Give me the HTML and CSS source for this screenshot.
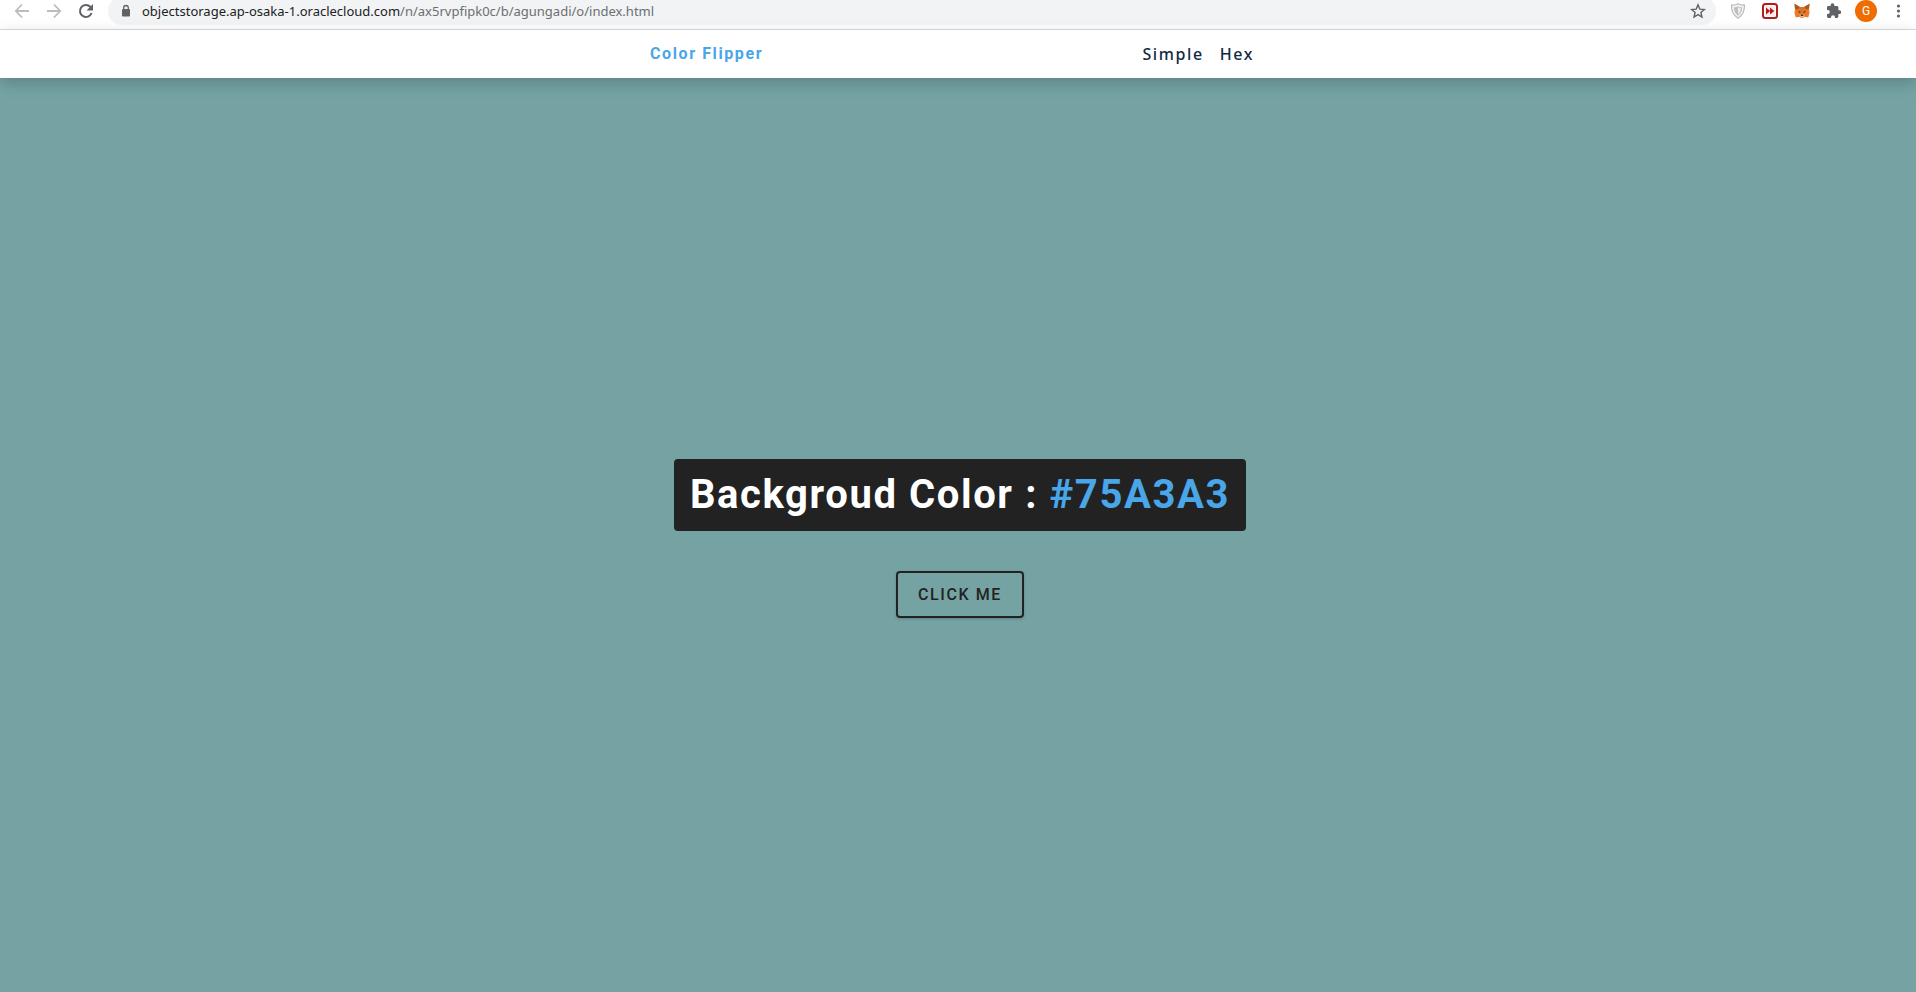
FILE: index.html
```html
<!DOCTYPE html>
<html lang="en">
<head>
<meta charset="utf-8">
<meta name="viewport" content="width=device-width, initial-scale=1">
<title>Color Flipper</title>
<link rel="stylesheet" href="styles.css">
</head>
<body>
<header class="toolbar">
  <div class="toolbar-row">
    <button class="tool tool-disabled" type="button" aria-label="Back">
      <svg class="icon" viewBox="0 0 16 16"><path d="M15 8H2M8 1.500L1.800 8 8 14.500" fill="none" stroke="currentColor" stroke-width="1.800"/></svg>
    </button>
    <button class="tool tool-disabled" type="button" aria-label="Forward">
      <svg class="icon" viewBox="0 0 16 16"><path d="M1 8H14M8 1.500L14.200 8 8 14.500" fill="none" stroke="currentColor" stroke-width="1.800"/></svg>
    </button>
    <button class="tool" type="button" aria-label="Reload">
      <svg class="icon" viewBox="0 0 16 16"><path d="M13.600 10A6 6 0 1 1 12.300 3.800L13.500 5" fill="none" stroke="currentColor" stroke-width="2"/><path d="M15 1v6.500H8.500z" fill="currentColor"/></svg>
    </button>
    <div class="omnibox">
      <svg class="lock" viewBox="0 0 12 16"><rect x="2" y="6" width="8" height="7.500" rx="1" fill="currentColor"/><path d="M3.700 6.500V4.800a2.300 2.300 0 0 1 4.600 0v1.700" fill="none" stroke="currentColor" stroke-width="1.300"/></svg>
      <span class="url"><span class="url-host">objectstorage.ap-osaka-1.oraclecloud.com</span>/n/ax5rvpfipk0c/b/agungadi/o/index.html</span>
      <button class="star" type="button" aria-label="Bookmark this page">
        <svg class="icon" viewBox="0 0 16 16"><path d="M8 1.800l1.800 4.300 4.600.4-3.500 3 1.100 4.600L8 11.600l-4 2.500 1.100-4.600-3.500-3 4.600-.4z" fill="none" stroke="currentColor" stroke-width="1.400"/></svg>
      </button>
    </div>
    <button class="tool" type="button" aria-label="Shield extension">
      <svg class="icon" viewBox="0 0 16 16"><path d="M8 .8C10 2 12.500 2.200 14.500 2c.2 6-2 10.500-6.500 13.200C3.500 12.500 1.300 8 1.500 2 3.500 2.200 6 2 8 .8z" fill="#f5f5f5" stroke="#b9babb" stroke-width="1.200"/><path d="M8 3.200c1.300.8 2.800 1 4.200 1C12 8 10.700 10.800 8 12.800 5.300 10.800 4 8 3.800 4.200c1.400 0 2.900-.2 4.200-1z" fill="#bfc0c1"/><path d="M8 4.300l2.800.6C10.600 7.500 9.800 9.700 8 11.500z" fill="#eeeeee"/></svg>
    </button>
    <button class="tool" type="button" aria-label="Fast forward extension">
      <svg class="icon" viewBox="0 0 16 16"><rect x="1" y="1" width="14" height="14" rx="2.500" fill="#fff" stroke="#a9201f" stroke-width="2"/><rect x="3" y="3" width="10" height="10" rx="1" fill="#fbe9e8"/><path d="M4 4.500L8.200 8 4 11.500zM8 4.500L12.300 8 8 11.500z" fill="#b51d1b"/></svg>
    </button>
    <button class="tool" type="button" aria-label="Fox wallet extension">
      <svg class="icon" viewBox="0 0 16 16"><path d="M.5.8L6 4h4L15.500.8 15 6l.5 4-1.300 4.500-3.700-.8L9 15H7l-1.500-1.300-3.700.8L.5 10 1 6z" fill="#ee7b24"/><path d="M.5.8L6 4 4 6.500 1 6zM15.500.8L10 4l2 2.500 3-.5z" fill="#a65b25"/><path d="M6 4h4l2 4-2.500 3h-3L4 8z" fill="#dd7229"/><path d="M3.800 8.200l2.700.6-.6 1.200zM12.200 8.200l-2.700.6.6 1.200z" fill="#263442"/><path d="M5.500 12.500l1.500-.8h2l1.500.8L9 14.500H7z" fill="#d9c4b3"/><path d="M7 11.700h2l.3 1.400H6.700z" fill="#28252a"/></svg>
    </button>
    <button class="tool" type="button" aria-label="Extensions">
      <svg class="icon" viewBox="0 0 16 16"><path d="M13.300 7.300h-.9V4.400c0-.8-.6-1.400-1.400-1.400H8.400v-.8a1.900 1.900 0 0 0-3.800 0V3H2.400C1.600 3 1 3.600 1 4.400V7h.8a2 2 0 0 1 0 4H1v2.600c0 .8.600 1.400 1.400 1.400H5v-.8a2 2 0 0 1 4 0v.8h2c.8 0 1.400-.6 1.400-1.400v-2.500h.9a1.900 1.900 0 0 0 0-3.800z" fill="currentColor"/></svg>
    </button>
    <button class="tool" type="button" aria-label="Profile"><span class="avatar">G</span></button>
    <button class="tool" type="button" aria-label="Menu">
      <svg class="icon" viewBox="0 0 16 16"><g fill="currentColor"><circle cx="8.500" cy="3" r="1.600"/><circle cx="8.500" cy="8" r="1.600"/><circle cx="8.500" cy="13" r="1.600"/></g></svg>
    </button>
  </div>
</header>
<nav class="nav">
  <div class="nav-center">
    <h4 class="brand">Color Flipper</h4>
    <ul class="nav-links">
      <li><a href="index.html">Simple</a></li>
      <li><a href="hex.html">Hex</a></li>
    </ul>
  </div>
</nav>
<main class="main">
  <h2 class="panel">Backgroud Color : <span class="color">#75A3A3</span></h2>
  <button class="btn" type="button">Click Me</button>
</main>
</body>
</html>
```
FILE: styles.css
```css
* {
  margin: 0;
  padding: 0;
  box-sizing: border-box;
}

body {
  display: flex;
  flex-direction: column;
  min-height: 100vh;
  background: #75a3a3;
  font-family: "Noto Sans", "Open Sans", sans-serif;
  font-size: 16px;
}

button {
  border: 0;
  background: none;
  font: inherit;
  color: inherit;
  cursor: pointer;
}

/* Browser toolbar, with its top edge cut off by the window */
.toolbar {
  overflow: hidden;
  padding-bottom: 4px;
  border-bottom: 1px solid #dadce0;
  background: #fff;
  color: #5f6368;
}

.toolbar-row {
  display: flex;
  align-items: center;
  height: 28px;
  margin-top: -3px;
  padding: 0 2px 0 6px;
}

.tool {
  display: flex;
  flex: none;
  align-items: center;
  justify-content: center;
  width: 32px;
  height: 28px;
}

.tool-disabled {
  color: #babcbe;
}

.icon {
  display: block;
  width: 16px;
  height: 16px;
}

.omnibox {
  display: flex;
  flex: 1;
  align-items: center;
  height: 28px;
  margin: 0 6px;
  padding: 0 10px 0 12px;
  border-radius: 14px;
  background: #f1f3f4;
}

.lock {
  width: 12px;
  height: 16px;
  margin-right: 10px;
}

.url {
  flex: 1;
  font-size: 13px;
  line-height: 20px;
  white-space: nowrap;
  color: #6b6f73;
}

.url-host {
  color: #202124;
}

.avatar {
  width: 22px;
  border-radius: 50%;
  background: #ef6c00;
  color: #fff;
  font-family: Roboto, sans-serif;
  font-size: 12px;
  line-height: 22px;
  text-align: center;
}

.nav {
  display: flex;
  justify-content: center;
  height: 48px;
  padding-left: 4px;
  background: #fff;
  box-shadow: 0 5px 15px rgba(0, 0, 0, 0.2);
}

.nav-center {
  display: flex;
  align-items: center;
  justify-content: space-between;
  width: 90%;
  max-width: 620px;
}

.brand {
  font-family: Roboto, sans-serif;
  font-size: 16px;
  line-height: 20px;
  letter-spacing: 0.1rem;
  color: #49a6e9;
}

.nav-links {
  display: flex;
  list-style: none;
}

.nav-links a {
  margin-right: 16px;
  font-weight: 500;
  letter-spacing: 0.1rem;
  text-decoration: none;
  color: #102a42;
}

.main {
  display: flex;
  flex: 1;
  flex-direction: column;
  align-items: center;
  justify-content: center;
  gap: 40px;
  padding: 6px 0 0 4px;
}

.panel {
  padding: 16px;
  border-radius: 4px;
  background: #222;
  color: #fff;
  font-family: Roboto, sans-serif;
  font-size: 40px;
  line-height: 40px;
  letter-spacing: 0.1rem;
}

.color {
  color: #49a6e9;
}

.btn {
  padding: 12px 20px;
  border: 2px solid #222;
  border-radius: 4px;
  box-shadow: 0 1px 3px rgba(0, 0, 0, 0.2);
  font-family: Roboto, sans-serif;
  font-weight: 500;
  line-height: 19px;
  letter-spacing: 0.1rem;
  text-transform: uppercase;
  color: #222;
}
```
